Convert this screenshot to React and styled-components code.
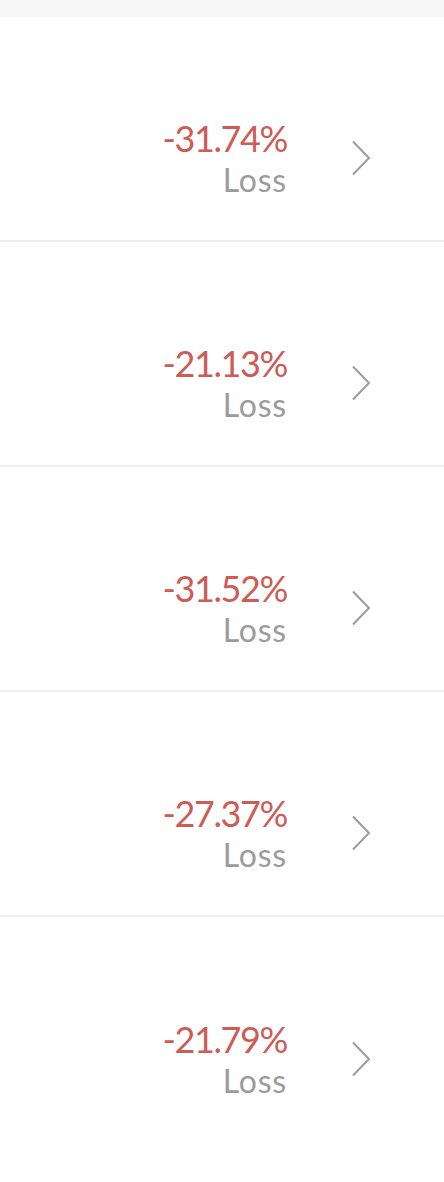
import React from "react";
import styled, { createGlobalStyle } from "styled-components";

const Global = createGlobalStyle`
  html, body { margin: 0; padding: 0; background: #ffffff; }
  body { font-family: Lato, "Open Sans", "Liberation Sans", sans-serif; }
`;

const Page = styled.div`
  width: 444px;
  min-height: 1182px;
  background: #ffffff;
`;

const TopBar = styled.div`
  height: 17px;
  background: #f7f7f7;
`;

const List = styled.ul`
  list-style: none;
  margin: 0;
  padding: 0;
`;

const Row = styled.li`
  height: 225px;
  box-sizing: border-box;
  display: flex;
  align-items: center;
  justify-content: flex-end;
  padding: 61px 73px 0 0;
  gap: 64px;
  border-bottom: ${(p) => (p.$last ? "none" : "2px solid #efefef")};
`;

const Figures = styled.div`
  display: flex;
  flex-direction: column;
  align-items: flex-end;
`;

const Percent = styled.div`
  font-size: 36px;
  font-weight: 400;
  line-height: 40px;
  color: #cd5b56;
  letter-spacing: -1.4px;
`;

const Label = styled.div`
  font-size: 32px;
  font-weight: 400;
  line-height: 43px;
  color: #9b9b9b;
  letter-spacing: 0.8px;
`;

const ChevronBox = styled.div`
  display: flex;
  margin-top: -3px;
`;

const Chevron = () => (
  <ChevronBox>
    <svg width="20" height="36" viewBox="0 0 20 36" fill="none">
      <path d="M2 1.5 L18 18 L2 34.5" stroke="#9c9c9c" strokeWidth="2" />
    </svg>
  </ChevronBox>
);

const items = ["-31.74%", "-21.13%", "-31.52%", "-27.37%", "-21.79%"];

export default function App() {
  return (
    <Page>
      <Global />
      <TopBar />
      <List>
        {items.map((v, i) => (
          <Row key={v} $last={i === items.length - 1}>
            <Figures>
              <Percent>{v}</Percent>
              <Label>Loss</Label>
            </Figures>
            <Chevron />
          </Row>
        ))}
      </List>
    </Page>
  );
}
